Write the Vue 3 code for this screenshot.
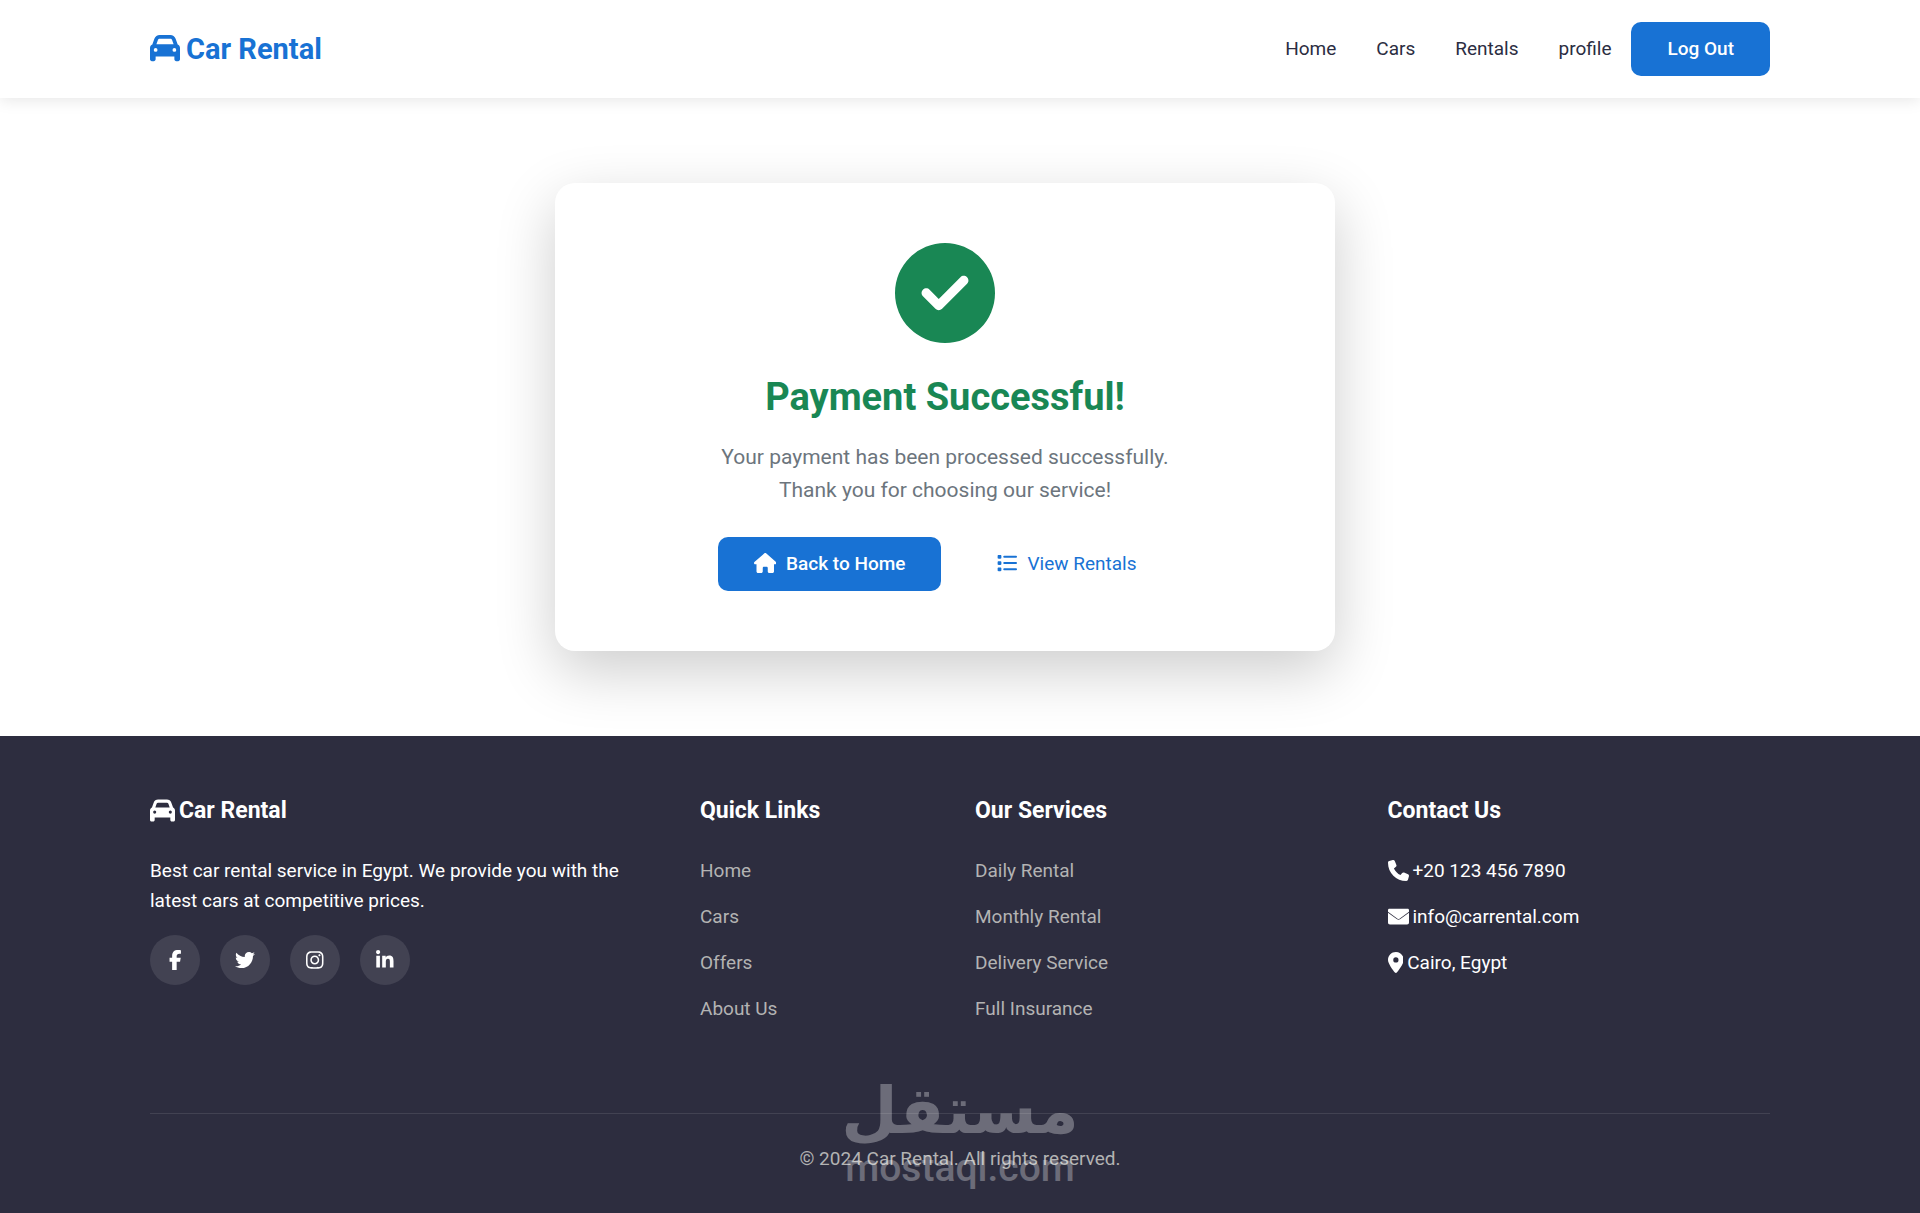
<template>
  <div class="page">
    <header class="navbar">
      <div class="container navbar-inner">
        <a href="#" class="brand">
          <svg class="icon" viewBox="0 0 512 512" aria-hidden="true"><path :d="icons.car" /></svg>
          <span>Car Rental</span>
        </a>
        <nav class="menu">
          <a v-for="item in menu" :key="item" href="#" class="menu-link">{{ item }}</a>
          <button type="button" class="btn btn-primary">Log Out</button>
        </nav>
      </div>
    </header>

    <main class="container main">
      <section class="card">
        <svg class="check" viewBox="0 0 512 512" aria-hidden="true"><path :d="icons.check" /></svg>
        <h1>Payment Successful!</h1>
        <p>Your payment has been processed successfully.<br />Thank you for choosing our service!</p>
        <div class="actions">
          <a href="#" class="btn btn-primary">
            <svg class="icon" viewBox="0 0 576 512" aria-hidden="true"><path :d="icons.home" /></svg>
            <span>Back to Home</span>
          </a>
          <a href="#" class="btn btn-link">
            <svg class="icon" viewBox="0 0 512 512" aria-hidden="true"><path :d="icons.list" /></svg>
            <span>View Rentals</span>
          </a>
        </div>
      </section>
    </main>

    <footer class="footer">
      <div class="container">
        <div class="row">
          <div class="col about">
            <h2>
              <svg class="icon" viewBox="0 0 512 512" aria-hidden="true"><path :d="icons.car" /></svg>
              <span>Car Rental</span>
            </h2>
            <p>Best car rental service in Egypt. We provide you with the latest cars at competitive prices.</p>
            <div class="socials">
              <a v-for="s in socials" :key="s.name" href="#" class="social" :aria-label="s.name">
                <svg :viewBox="s.box" aria-hidden="true"><path :d="s.path" /></svg>
              </a>
            </div>
          </div>
          <div v-for="group in groups" :key="group.title" class="col">
            <h2>{{ group.title }}</h2>
            <ul>
              <li v-for="link in group.links" :key="link"><a href="#">{{ link }}</a></li>
            </ul>
          </div>
          <div class="col">
            <h2>Contact Us</h2>
            <ul class="contact">
              <li v-for="c in contacts" :key="c.text">
                <svg class="icon" :viewBox="c.box" aria-hidden="true"><path :d="c.path" /></svg>
                <span>{{ c.text }}</span>
              </li>
            </ul>
          </div>
        </div>
        <div class="copyright">© 2024 Car Rental. All rights reserved.</div>
      </div>
      <div class="watermark">
        <span class="watermark-ar" lang="ar" dir="rtl">مستقل</span>
        <span class="watermark-en">mostaql.com</span>
      </div>
    </footer>
  </div>
</template>

<script setup>
const icons = {
  car: "M135.2 117.4L109.1 192H402.9l-26.1-74.6C372.3 104.6 360.2 96 346.6 96H165.4c-13.6 0-25.7 8.6-30.2 21.4zM39.6 196.8L74.8 96.3C88.3 57.8 124.6 32 165.4 32H346.6c40.8 0 77.1 25.8 90.6 64.3l35.2 100.5c23.2 9.6 39.6 32.5 39.6 59.2V400v48c0 17.7-14.3 32-32 32H448c-17.7 0-32-14.3-32-32V400H96v48c0 17.7-14.3 32-32 32H32c-17.7 0-32-14.3-32-32V400 256c0-26.7 16.4-49.6 39.6-59.2zM128 288a32 32 0 1 0 -64 0 32 32 0 1 0 64 0zm288 32a32 32 0 1 0 0-64 32 32 0 1 0 0 64z",
  check: "M256 512A256 256 0 1 0 256 0a256 256 0 1 0 0 512zM369 209L241 337c-9.4 9.4-24.6 9.4-33.9 0l-64-64c-9.4-9.4-9.4-24.6 0-33.9s24.6-9.4 33.9 0l47 47L335 175c9.4-9.4 24.6-9.4 33.9 0s9.4 24.6 0 33.9z",
  home: "M575.8 255.5c0 18-15 32.1-32 32.1h-32l.7 160.2c0 2.7-.2 5.4-.5 8.1V472c0 22.1-17.9 40-40 40H456c-1.1 0-2.2 0-3.3-.1c-1.4 .1-2.8 .1-4.2 .1H416 392c-22.1 0-40-17.9-40-40V448 384c0-17.7-14.3-32-32-32H256c-17.7 0-32 14.3-32 32v64 24c0 22.1-17.9 40-40 40H160 128.1c-1.5 0-3-.1-4.5-.2c-1.2 .1-2.4 .2-3.6 .2H104c-22.1 0-40-17.9-40-40V360c0-.9 0-1.9 .1-2.8V287.6H32c-18 0-32-14-32-32.1c0-9 3-17 10-24L266.4 8c7-7 15-8 22-8s15 2 21 7L564.8 231.5c8 7 12 15 11 24z",
  list: "M40 48C26.7 48 16 58.7 16 72v48c0 13.3 10.7 24 24 24H88c13.3 0 24-10.7 24-24V72c0-13.3-10.7-24-24-24H40zM184 72a24 24 0 0 0 0 48H488a24 24 0 0 0 0-48zM184 232a24 24 0 0 0 0 48H488a24 24 0 0 0 0-48zM184 392a24 24 0 0 0 0 48H488a24 24 0 0 0 0-48zM16 232v48c0 13.3 10.7 24 24 24H88c13.3 0 24-10.7 24-24V232c0-13.3-10.7-24-24-24H40c-13.3 0-24 10.7-24 24zM40 368c-13.3 0-24 10.7-24 24v48c0 13.3 10.7 24 24 24H88c13.3 0 24-10.7 24-24V392c0-13.3-10.7-24-24-24H40z",
}

const menu = ["Home", "Cars", "Rentals", "profile"]

const groups = [
  { title: "Quick Links", links: ["Home", "Cars", "Offers", "About Us"] },
  { title: "Our Services", links: ["Daily Rental", "Monthly Rental", "Delivery Service", "Full Insurance"] },
]

const contacts = [
  {
    text: "+20 123 456 7890",
    box: "0 0 512 512",
    path: "M164.9 24.6c-7.7-18.6-28-28.5-47.4-23.2l-88 24C12.1 30.2 0 46 0 64C0 311.4 200.6 512 448 512c18 0 33.8-12.1 38.6-29.5l24-88c5.3-19.4-4.6-39.7-23.2-47.4l-96-40c-16.3-6.8-35.2-2.1-46.3 11.6L304.7 368C234.3 334.7 177.3 277.7 144 207.3L193.3 167c13.7-11.2 18.4-30 11.6-46.3l-40-96z",
  },
  {
    text: "info@carrental.com",
    box: "0 0 512 512",
    path: "M32 64C14 64 0 78 0 96V138L232 308C247 319 265 319 280 308L512 138V96C512 78 498 64 480 64ZM0 164V400C0 430 18 448 48 448H464C494 448 512 430 512 400V164L292 325C270 341 242 341 220 325Z",
  },
  {
    text: "Cairo, Egypt",
    box: "0 0 384 512",
    path: "M215.7 499.2C267 435 384 279.4 384 192C384 86 298 0 192 0S0 86 0 192c0 87.4 117 243 168.3 307.2c12.3 15.3 35.1 15.3 47.4 0zM192 128a64 64 0 1 1 0 128 64 64 0 1 1 0-128z",
  },
]

const socials = [
  {
    name: "Facebook",
    box: "0 0 320 512",
    path: "M80 299.3V512H196V299.3h86.5l18-97.8H196V166.9c0-51.7 20.3-71.5 72.7-71.5c16.3 0 29.4 .4 37 1.2V7.9C291.4 4 256.4 0 236.2 0C129.3 0 80 50.5 80 159.4v42.1H14v97.8H80z",
  },
  {
    name: "Twitter",
    box: "0 0 512 512",
    path: "M459.37 151.716c.325 4.548.325 9.097.325 13.645 0 138.72-105.583 298.558-298.558 298.558-59.452 0-114.68-17.219-161.137-47.106 8.447.974 16.568 1.299 25.34 1.299 49.055 0 94.213-16.568 130.274-44.832-46.132-.975-84.792-31.188-98.112-72.772 6.498.974 12.995 1.624 19.818 1.624 9.421 0 18.843-1.3 27.614-3.573-48.081-9.747-84.143-51.98-84.143-102.985v-1.299c13.969 7.797 30.214 12.67 47.431 13.319-28.264-18.843-46.781-51.005-46.781-87.391 0-19.492 5.197-37.36 14.294-52.954 51.655 63.675 129.3 105.258 216.365 109.807-1.624-7.797-2.599-15.918-2.599-24.04 0-57.828 46.782-104.934 104.934-104.934 30.213 0 57.502 12.67 76.67 33.137 23.715-4.548 46.456-13.32 66.599-25.34-7.798 24.366-24.366 44.833-46.132 57.827 21.117-2.273 41.584-8.122 60.426-16.243-14.292 20.791-32.161 39.308-52.628 54.253z",
  },
  {
    name: "Instagram",
    box: "0 0 448 512",
    path: "M224.1 141c-63.6 0-114.9 51.3-114.9 114.9s51.3 114.9 114.9 114.9S339 319.5 339 255.9 287.7 141 224.1 141zm0 189.6c-41.1 0-74.7-33.5-74.7-74.7s33.5-74.7 74.7-74.7 74.7 33.5 74.7 74.7-33.6 74.7-74.7 74.7zm146.4-194.3c0 14.9-12 26.8-26.8 26.8-14.9 0-26.8-12-26.8-26.8s12-26.8 26.8-26.8 26.8 12 26.8 26.8zm76.1 27.2c-1.7-35.9-9.9-67.7-36.2-93.9-26.2-26.2-58-34.4-93.9-36.2-37-2.1-147.9-2.1-184.9 0-35.8 1.7-67.6 9.9-93.9 36.1s-34.4 58-36.2 93.9c-2.1 37-2.1 147.9 0 184.9 1.7 35.9 9.9 67.7 36.2 93.9s58 34.4 93.9 36.2c37 2.1 147.9 2.1 184.9 0 35.9-1.7 67.7-9.9 93.9-36.2 26.2-26.2 34.4-58 36.2-93.9 2.1-37 2.1-147.8 0-184.8zM398.8 388c-7.8 19.6-22.9 34.7-42.6 42.6-29.5 11.7-99.5 9-132.1 9s-102.7 2.6-132.1-9c-19.6-7.8-34.7-22.9-42.6-42.6-11.7-29.5-9-99.5-9-132.1s-2.6-102.7 9-132.1c7.8-19.6 22.9-34.7 42.6-42.6 29.5-11.7 99.5-9 132.1-9s102.7-2.6 132.1 9c19.6 7.8 34.7 22.9 42.6 42.6 11.7 29.5 9 99.5 9 132.1s2.7 102.7-9 132.1z",
  },
  {
    name: "LinkedIn",
    box: "0 0 448 512",
    path: "M100.28 448H7.4V148.9h92.88zM53.79 108.1C24.09 108.1 0 83.5 0 53.8a53.79 53.79 0 0 1 107.58 0c0 29.7-24.1 54.3-53.79 54.3zM447.9 448h-92.68V302.4c0-34.7-.7-79.2-48.29-79.2-48.29 0-55.69 37.7-55.69 76.7V448h-92.78V148.9h89.08v40.8h1.3c12.4-23.5 42.69-48.3 87.88-48.3 94 0 111.28 61.9 111.28 142.3V448z",
  },
]
</script>

<style>
body {
  margin: 0;
  background: #fff;
}
</style>

<style scoped>
.page {
  min-height: 100vh;
  display: flex;
  flex-direction: column;
  font-family: Roboto, "Open Sans", sans-serif;
  font-size: 19px;
  line-height: 30px;
  color: #2b2d42;
}
.page * {
  box-sizing: border-box;
}
a {
  color: inherit;
  text-decoration: none;
}
h1,
h2,
p,
ul {
  margin: 0;
  padding: 0;
}
ul {
  list-style: none;
}
svg {
  fill: currentColor;
  flex-shrink: 0;
}
.icon {
  height: 20px;
  margin-bottom: 2px;
}
.container {
  width: 100%;
  max-width: 1650px;
  margin: 0 auto;
  padding: 0 15px;
}

/* navbar */
.navbar {
  position: relative;
  background: #fff;
  box-shadow: 0 2px 15px rgba(0, 0, 0, 0.1);
}
.navbar-inner {
  display: flex;
  align-items: center;
  justify-content: space-between;
  padding-top: 22px;
  padding-bottom: 22px;
}
.brand {
  display: flex;
  align-items: center;
  gap: 6px;
  font-size: 29px;
  font-weight: 700;
  color: #1872d4;
}
.brand .icon {
  height: 30px;
}
.menu {
  display: flex;
  align-items: center;
}
.menu-link {
  padding: 0 20px;
}
.btn {
  display: inline-flex;
  align-items: center;
  gap: 10px;
  padding: 12px 36px;
  border: 0;
  border-radius: 10px;
  font-family: inherit;
  font-size: 19px;
  line-height: 30px;
  cursor: pointer;
}
.btn-primary {
  background: #1872d4;
  color: #fff;
  font-weight: 500;
}
.btn-link {
  color: #1872d4;
}

/* success card */
.main {
  padding: 85px 45px 85px 15px;
}
.card {
  max-width: 780px;
  margin: 0 auto;
  padding: 60px;
  border-radius: 20px;
  background: #fff;
  box-shadow: 0 20px 60px rgba(0, 0, 0, 0.2);
  text-align: center;
}
.check {
  display: block;
  width: 100px;
  height: 100px;
  margin: 0 auto 30px;
  color: #198754;
}
.card h1 {
  margin-bottom: 20px;
  font-size: 38px;
  line-height: 48px;
  font-weight: 700;
  color: #198754;
}
.card p {
  margin-bottom: 30px;
  font-size: 21px;
  line-height: 33px;
  color: #6c757d;
}
.actions {
  display: flex;
  flex-wrap: wrap;
  justify-content: center;
  gap: 20px;
}

/* footer */
.footer {
  position: relative;
  flex: 1;
  padding: 60px 0 39px;
  background: #2d2d3f;
  color: #fff;
}
.row {
  display: grid;
  grid-template-columns: 4fr 2fr 3fr 3fr;
  margin: 0 -15px;
}
.col {
  padding: 0 15px;
}
.footer h2 {
  display: flex;
  align-items: center;
  gap: 4px;
  margin-bottom: 30px;
  font-size: 23px;
  line-height: 30px;
  font-weight: 700;
}
.footer h2 .icon {
  height: 25px;
}
.socials {
  display: flex;
  gap: 20px;
  margin-top: 19px;
}
.social {
  display: flex;
  align-items: center;
  justify-content: center;
  width: 50px;
  height: 50px;
  border-radius: 50%;
  background: rgba(255, 255, 255, 0.1);
}
.social svg {
  height: 20px;
}
.col li {
  margin-bottom: 16px;
}
.col li a {
  color: #b3b3b3;
}
.contact li {
  display: flex;
  align-items: center;
  gap: 4px;
}
.contact .icon {
  height: 21px;
}
.copyright {
  margin-top: 73px;
  padding-top: 30px;
  border-top: 1px solid rgba(255, 255, 255, 0.1);
  text-align: center;
  color: #b3b3b3;
}
.watermark {
  position: absolute;
  right: 0;
  bottom: 20px;
  left: 0;
  display: flex;
  flex-direction: column;
  align-items: center;
  color: #fff;
  opacity: 0.3;
  pointer-events: none;
}
.watermark-ar {
  font-family: "DejaVu Sans", sans-serif;
  font-size: 65px;
  line-height: 65px;
  font-weight: 700;
}
.watermark-en {
  font-size: 39px;
  line-height: 50px;
  font-weight: 500;
}

@media (max-width: 900px) {
  .navbar-inner,
  .menu {
    flex-wrap: wrap;
  }
  .main {
    padding-right: 15px;
  }
  .row {
    grid-template-columns: 1fr;
    gap: 30px;
  }
}
</style>
